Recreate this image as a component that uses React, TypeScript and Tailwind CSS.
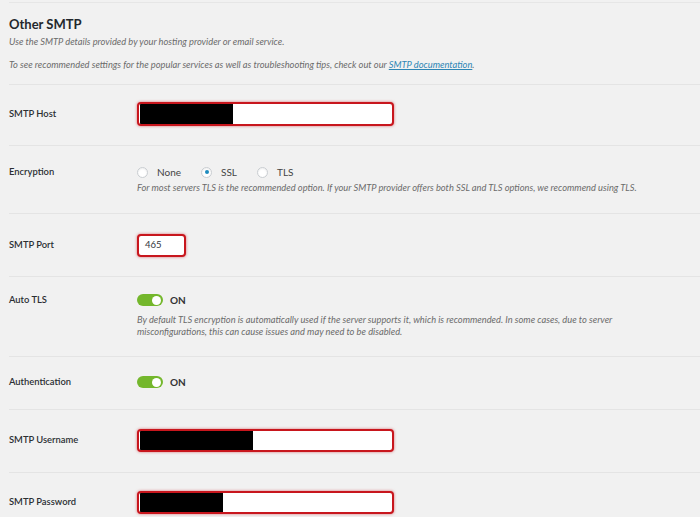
import React from "react";

const font = { fontFamily: 'Lato, "Open Sans", sans-serif' };

function Label({ children, h = "h-[24px]" }: { children: React.ReactNode; h?: string }) {
  return (
    <div className={`w-[128px] shrink-0 flex items-center ${h} text-[9.4px] font-semibold text-[#2b2f33]`}>
      {children}
    </div>
  );
}

function RedInput({ w, h, black, text }: { w: string; h: string; black?: string; text?: string }) {
  return (
    <div
      className={`${w} ${h} bg-white border-2 border-[#c8161d] rounded-[4px] shadow-[0_0_3px_rgba(200,20,30,0.6)] flex items-center overflow-hidden`}
    >
      {black ? <div className={`${black} h-full bg-black ml-[1px]`} /> : null}
      {text ? <span className="pl-[6px] text-[9.5px] text-[#32373c]">{text}</span> : null}
    </div>
  );
}

function Radio({ checked, label }: { checked?: boolean; label: string }) {
  return (
    <div className="flex items-center">
      <span className="w-[11px] h-[11px] rounded-full bg-white border border-[#c9cdd1] flex items-center justify-center shadow-[inset_0_1px_2px_rgba(0,0,0,0.07)]">
        {checked ? <span className="w-[4px] h-[4px] rounded-full bg-[#1e8cbe]" /> : null}
      </span>
      <span className="ml-[9px] text-[10px] text-[#444]">{label}</span>
    </div>
  );
}

function Toggle() {
  return (
    <div className="flex items-center h-[16px]">
      <span className="w-[26px] h-[12px] rounded-full bg-[#74b72c] flex items-center justify-end pr-[2px]">
        <span className="w-[9px] h-[9px] rounded-full bg-white" />
      </span>
      <span className="ml-[7px] text-[10px] font-bold text-[#333]">ON</span>
    </div>
  );
}

const desc = "text-[9.3px] italic text-[#6b6b6b]";

export default function App() {
  return (
    <div className="w-[700px] h-[517px] bg-[#f1f1f1] overflow-hidden" style={font}>
      <div className="pl-[9px]">
        <div className="border-t border-[#e6e6e6] mt-[2px]" />
        <h2 className="text-[13px] font-bold text-[#23282d] leading-[20px] mt-[11px]">Other SMTP</h2>
        <p className={`${desc} leading-[14px] mt-[1px]`}>
          Use the SMTP details provided by your hosting provider or email service.
        </p>
        <p className={`${desc} leading-[14px] mt-[9px]`}>
          To see recommended settings for the popular services as well as troubleshooting tips, check out our{" "}
          <a className="text-[#2e86b5] underline">SMTP documentation</a>.
        </p>

        {/* SMTP Host */}
        <div className="border-t border-[#e4e4e4] mt-[12px] flex pt-[17px] pb-[19px]">
          <Label>SMTP Host</Label>
          <RedInput w="w-[257px]" h="h-[24px]" black="w-[93px]" />
        </div>

        {/* Encryption */}
        <div className="border-t border-[#e4e4e4] flex pt-[18px] pb-[17px]">
          <Label h="h-[16px]">Encryption</Label>
          <div>
            <div className="flex items-center h-[16px] gap-[20px]">
              <Radio label="None" />
              <Radio checked label="SSL" />
              <Radio label="TLS" />
            </div>
            <p className={`${desc} leading-[16px]`}>
              For most servers TLS is the recommended option. If your SMTP provider offers both SSL and TLS options, we recommend using TLS.
            </p>
          </div>
        </div>

        {/* SMTP Port */}
        <div className="border-t border-[#e4e4e4] flex pt-[20px] pb-[19px]">
          <Label h="h-[23px]">SMTP Port</Label>
          <RedInput w="w-[49px]" h="h-[23px]" text="465" />
        </div>

        {/* Auto TLS */}
        <div className="border-t border-[#e4e4e4] flex pt-[15px] pb-[18px]">
          <Label h="h-[16px]">Auto TLS</Label>
          <div>
            <Toggle />
            <p className={`${desc} leading-[12px] mt-[6px] w-[490px]`}>
              By default TLS encryption is automatically used if the server supports it, which is recommended. In some cases, due to server misconfigurations, this can cause issues and may need to be disabled.
            </p>
          </div>
        </div>

        {/* Authentication */}
        <div className="border-t border-[#e4e4e4] flex pt-[17px] pb-[19px]">
          <Label h="h-[16px]">Authentication</Label>
          <Toggle />
        </div>

        {/* Username */}
        <div className="border-t border-[#e4e4e4] flex pt-[19px] pb-[20px]">
          <Label h="h-[23px]">SMTP Username</Label>
          <RedInput w="w-[257px]" h="h-[23px]" black="w-[113px]" />
        </div>

        {/* Password */}
        <div className="border-t border-[#e4e4e4] flex pt-[18px] pb-[18px]">
          <Label h="h-[23px]">SMTP Password</Label>
          <RedInput w="w-[257px]" h="h-[23px]" black="w-[83px]" />
        </div>
      </div>
    </div>
  );
}
